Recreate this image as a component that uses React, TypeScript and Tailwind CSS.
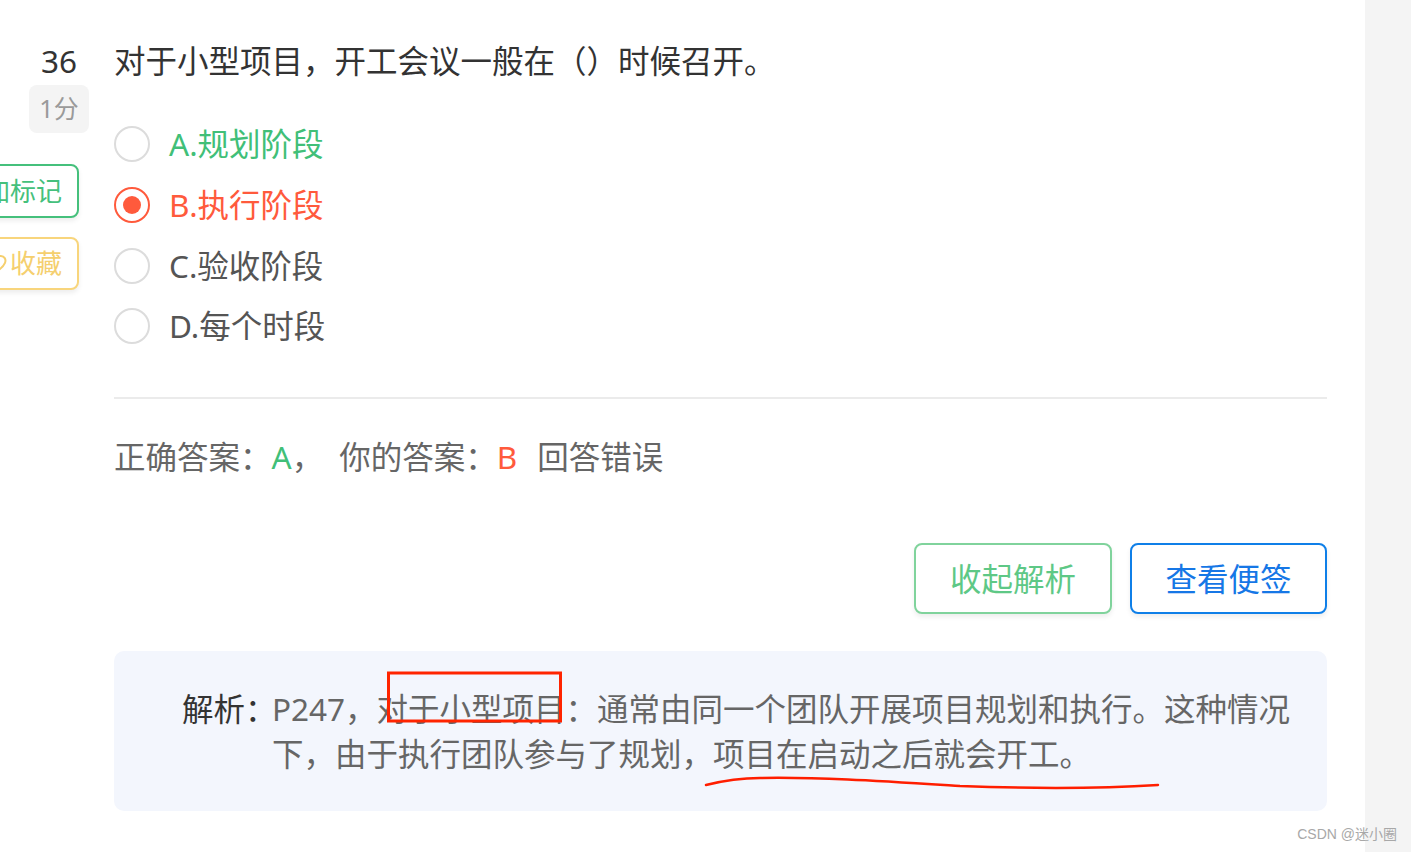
import React from "react";

const options = [
  { key: "A", text: "A.规划阶段", tone: "correct" },
  { key: "B", text: "B.执行阶段", tone: "wrong" },
  { key: "C", text: "C.验收阶段", tone: "normal" },
  { key: "D", text: "D.每个时段", tone: "normal" },
];

const Radio = ({ checked }: { checked: boolean }) =>
  checked ? (
    <span className="flex h-[36px] w-[36px] shrink-0 items-center justify-center rounded-full border-2 border-[#ff5a3c]">
      <span className="h-[18px] w-[18px] rounded-full bg-[#ff5a3c]" />
    </span>
  ) : (
    <span className="h-[36px] w-[36px] shrink-0 rounded-full border-2 border-[#dcdcdc]" />
  );

const HeartIcon = () => (
  <svg width="24" height="24" viewBox="0 0 24 24" fill="none" stroke="currentColor" strokeWidth="2" className="mr-[2px]">
    <path d="M12 20s-7-4.5-9-9.2C1.6 7.4 3.7 4 7.1 4c2 0 3.6 1.1 4.9 2.9C13.3 5.1 14.9 4 16.9 4c3.4 0 5.5 3.4 4.1 6.8C19 15.5 12 20 12 20z" />
  </svg>
);

export default function App() {
  return (
    <div
      className="relative flex h-[852px] w-full overflow-hidden bg-white"
      style={{ fontFamily: '"Noto Sans", "Noto Sans CJK SC", sans-serif' }}
    >
      <div className="flex flex-1">
        {/* Left: number, score, actions */}
        <div className="flex w-[89px] shrink-0 flex-col items-end pt-[39px]">
          <div className="mr-[12px] text-[31.5px] leading-[44px] text-[#333]">36</div>
          <div className="mt-[2px] flex h-[48px] w-[60px] items-center justify-center rounded-[8px] bg-[#f4f4f4] text-[25px] text-[#9a9a9a]">
            1分
          </div>
          <button className="mr-[10px] mt-[31px] flex h-[54px] shrink-0 items-center whitespace-nowrap rounded-[8px] border-2 border-[#45c07c] bg-white pl-[14px] pr-[15px] text-[26px] text-[#45c07c] shadow-[0_3px_5px_rgba(0,0,0,0.07)]">
            加标记
          </button>
          <button className="mr-[10px] mt-[19px] flex h-[53px] shrink-0 items-center whitespace-nowrap rounded-[8px] border-2 border-[#f8d57c] bg-white pl-[14px] pr-[15px] text-[26px] text-[#f5cf6e] shadow-[0_3px_5px_rgba(0,0,0,0.07)]">
            <HeartIcon />
            收藏
          </button>
        </div>

        {/* Question body */}
        <div className="ml-[25px] flex w-[1213px] shrink-0 flex-col pt-[39px]">
          <h2 className="text-[31.5px] font-normal leading-[44px] text-[#333]">
            对于小型项目，开工会议一般在（）时候召开。
          </h2>

          <div className="mt-[31px] flex flex-col">
            {options.map((o) => (
              <div key={o.key} className="flex h-[60.7px] items-center gap-[19px]">
                <Radio checked={o.tone === "wrong"} />
                <span
                  className={`text-[31.5px] leading-[44px] ${
                    o.tone === "correct"
                      ? "text-[#41bf78]"
                      : o.tone === "wrong"
                      ? "text-[#ff5a3c]"
                      : "text-[#555]"
                  }`}
                >
                  {o.text}
                </span>
              </div>
            ))}
          </div>

          <div className="mt-[40px] h-[2px] bg-[#ebebeb]" />

          <div className="mt-[36px] flex items-center whitespace-nowrap text-[31.5px] leading-[44px] text-[#666]">
            <span>正确答案：</span>
            <span className="text-[#41bf78]">A</span>
            <span>，</span>
            <span className="ml-[16px]">你的答案：</span>
            <span className="text-[#ff5a3c]">B</span>
            <span className="ml-[20px]">回答错误</span>
          </div>

          <div className="mt-[64px] flex justify-end gap-[18px]">
            <button className="flex h-[71px] w-[198px] items-center justify-center rounded-[8px] border-2 border-[#80d39c] bg-white text-[31.5px] text-[#5ec886] shadow-[0_3px_5px_rgba(0,0,0,0.07)]">
              收起解析
            </button>
            <button className="flex h-[71px] w-[197px] items-center justify-center rounded-[8px] border-2 border-[#0f7fe8] bg-white text-[31.5px] text-[#1677e6] shadow-[0_3px_5px_rgba(0,0,0,0.07)]">
              查看便签
            </button>
          </div>

          {/* Analysis */}
          <div className="mt-[37px] flex rounded-[10px] bg-[#f3f6fd] py-[35px] pl-[68px] pr-[24px] text-[31.5px] leading-[45px]">
            <span className="w-[90px] shrink-0 whitespace-nowrap text-[#333]">解析：</span>
            <p className="flex-1 text-[#666]">
              P247，对于小型项目：通常由同一个团队开展项目规划和执行。这种情况下，由于执行团队参与了规划，项目在启动之后就会开工。
            </p>
          </div>
        </div>
      </div>

      {/* Right scroll gutter */}
      <div className="w-[46px] shrink-0 bg-[#f4f4f4]" />

      {/* Hand-drawn annotations */}
      <svg className="pointer-events-none absolute left-0 top-0" width="1411" height="852">
        <rect x="388.5" y="673" width="172" height="48" fill="none" stroke="#ff2400" strokeWidth="3" />
        <path
          d="M706 785 C 722 781, 738 778, 760 778 C 820 777, 880 781, 960 786 C 1040 789, 1110 788, 1158 785"
          fill="none"
          stroke="#ff1e00"
          strokeWidth="2.5"
          strokeLinecap="round"
        />
      </svg>

      <div
        className="absolute bottom-[9px] right-[14px] text-[14px] leading-[18px] text-[#a8a8a8]"
        style={{ fontFamily: '"Liberation Sans", "Noto Sans CJK SC", sans-serif' }}
      >
        CSDN @迷小圈
      </div>
    </div>
  );
}
